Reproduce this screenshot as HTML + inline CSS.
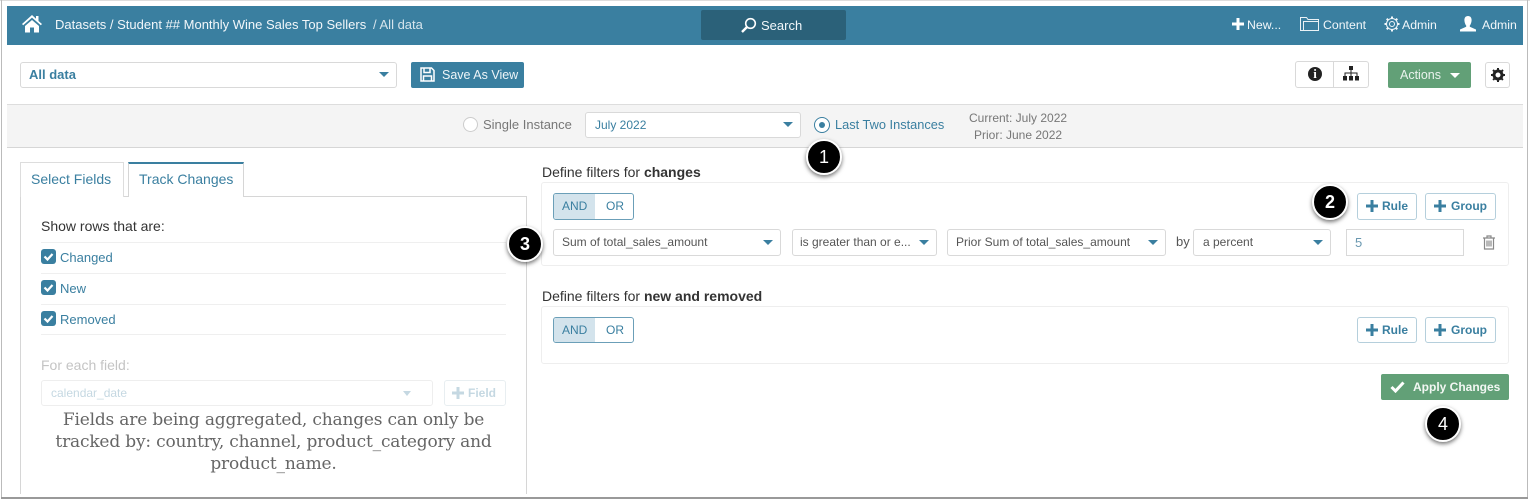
<!DOCTYPE html>
<html><head><meta charset="utf-8"><style>
html,body{margin:0;padding:0;width:1530px;height:501px;overflow:hidden;background:#fff}
body{position:relative;font-family:"Liberation Sans",sans-serif;font-size:13px;color:#444}
.a{position:absolute;box-sizing:border-box}
.t{position:absolute;white-space:nowrap;line-height:16px}
.sel{position:absolute;box-sizing:border-box;background:#fff;border:1px solid #d9d9d9;border-radius:3px}
.car{position:absolute;width:0;height:0;border-left:5px solid transparent;border-right:5px solid transparent;border-top:5px solid #3a7fa0}
.btn{position:absolute;box-sizing:border-box;background:#fff;border:1px solid #b5cfdc;border-radius:3px;color:#3a7fa0;font-weight:bold;font-size:12px}
.num{position:absolute;box-sizing:border-box;width:36px;height:36px;border-radius:50%;background:#000;border:2px solid #fff;box-shadow:0 2px 4px rgba(0,0,0,.55);color:#fff;font-size:18px;text-align:center;line-height:32px}
.cb{position:absolute;width:15px;height:15px;border-radius:3px;background:#3a7fa0}
.hr{position:absolute;left:41px;width:465px;height:1px;background:#efefef}
</style></head><body>
<div class="a" style="left:0;top:0;width:1530px;height:1px;background:#ddd"></div>
<div class="a" style="left:1px;top:0;width:1px;height:498px;background:#bbb"></div>
<div class="a" style="left:1527px;top:0;width:1px;height:498px;background:#bbb"></div>
<div class="a" style="left:1px;top:497px;width:1527px;height:2px;background:#999"></div>

<div class="a" style="left:7px;top:6px;width:1516px;height:39px;background:#3a7fa0"></div>
<svg class="a" style="left:21px;top:14px" width="22" height="19" viewBox="0 0 22 19"><path d="M11 1L1 10l1.2 1.3L11 3.6l8.8 7.7L21 10l-3.500-3V2h-2.500v2.800z" fill="#fff"/><path d="M4 12l7-6 7 6v6.500h-5v-5H9v5H4z" fill="#fff"/></svg>
<div class="t" style="left:55px;top:17px;color:#f2f7fa">Datasets / Student ## Monthly Wine Sales Top Sellers</div>
<div class="t" style="left:373px;top:17px;color:#d5e4ec">/ All data</div>
<div class="a" style="left:701px;top:10px;width:145px;height:30px;background:#2b6179;border-radius:2px"></div>
<svg class="a" style="left:740px;top:17px" width="18" height="17" viewBox="0 0 18 17"><circle cx="10.500" cy="6.500" r="4.800" fill="none" stroke="#fff" stroke-width="1.600"/><path d="M7 10l-5 5" stroke="#fff" stroke-width="2.400"/></svg>
<div class="t" style="left:761px;top:18px;color:#f2f7fa">Search</div>

<svg class="a" style="left:1232px;top:18px" width="12" height="12" viewBox="0 0 12 12"><path d="M4.500 0h3v4.500H12v3H7.500V12h-3V7.500H0v-3h4.500z" fill="#fff"/></svg>
<div class="t" style="left:1247px;top:17px;color:#f2f7fa;font-size:12.300px">New...</div>
<svg class="a" style="left:1300px;top:16px" width="19" height="16" viewBox="0 0 19 16" fill="none" stroke="#eaf2f6" stroke-width="1"><path d="M.5 14.500V1.500h6l1.500 2h10.500v11z"/><path d="M3.500 14.500V5.500h15"/></svg>
<div class="t" style="left:1323px;top:17px;color:#f2f7fa;font-size:12.300px">Content</div>
<svg class="a" style="left:1384px;top:16px" width="16" height="16" viewBox="0 0 16 16" fill="none" stroke="#f2f7fa"><circle cx="8" cy="8" r="2.500"/><circle cx="8" cy="8" r="5.500" stroke-width="1"/><path d="M8 .5v2M8 13.500v2M.5 8h2M13.500 8h2M2.700 2.700l1.400 1.400M11.900 11.900l1.400 1.400M2.700 13.300l1.400-1.400M11.900 4.100l1.400-1.400" stroke-width="2"/></svg>
<div class="t" style="left:1402px;top:17px;color:#f2f7fa;font-size:12.300px">Admin</div>
<svg class="a" style="left:1460px;top:16px" width="16" height="16" viewBox="0 0 16 16"><path d="M8 0c2.400 0 3.600 1.800 3.600 4S10.500 9 9.800 9.500v1.200L16 13.500V15.500H0v-2l6.200-2.800V9.500C5.500 9 4.400 6.200 4.400 4S5.600 0 8 0z" fill="#fff"/></svg>
<div class="t" style="left:1482px;top:17px;color:#f2f7fa;font-size:12.300px">Admin</div>

<div class="sel" style="left:20px;top:62px;width:377px;height:26px"></div>
<div class="t" style="left:29px;top:67px;color:#3a7fa0;font-weight:bold">All data</div>
<div class="car" style="left:379px;top:72px"></div>
<div class="a" style="left:411px;top:62px;width:113px;height:26px;background:#3a7fa0;border-radius:2px"></div>
<svg class="a" style="left:420px;top:67px" width="15" height="15" viewBox="0 0 15 15" fill="none" stroke="#fff" stroke-width="1.500"><path d="M1 1h10.500L14 3.500V14H1z"/><path d="M4 1.500v4h6v-4M3.500 14V9h8v5"/></svg>
<div class="t" style="left:442px;top:67px;color:#eef5f8;font-size:12.500px">Save As View</div>

<div class="sel" style="left:1295px;top:61px;width:74px;height:27px"></div>
<div class="a" style="left:1333px;top:61px;width:1px;height:27px;background:#d9d9d9"></div>
<div class="a" style="left:1308px;top:67px;width:14px;height:14px;border-radius:50%;background:#222"></div>
<div class="t" style="left:1308px;top:66px;width:14px;text-align:center;color:#fff;font-weight:bold;font-family:'Liberation Serif',serif;font-size:13px">i</div>
<svg class="a" style="left:1343px;top:66px" width="16" height="15" viewBox="0 0 16 15"><path d="M6 0h4v4H8.500v2.500H14.500V10H13.500V7.500H8.500V10h-1V7.500H2.500V10h-1V6.500H7.500V4H6z" fill="#222"/><rect y="10" width="4" height="4.500" fill="#222"/><rect x="6" y="10" width="4" height="4.500" fill="#222"/><rect x="12" y="10" width="4" height="4.500" fill="#222"/></svg>
<div class="a" style="left:1388px;top:62px;width:83px;height:26px;background:#62a077;border-radius:2px"></div>
<div class="t" style="left:1400px;top:67px;color:#eaf3ed;font-size:12.500px">Actions</div>
<div class="car" style="left:1450px;top:73px;border-top-color:#fff"></div>
<div class="sel" style="left:1485px;top:62px;width:25px;height:26px"></div>
<svg class="a" style="left:1491px;top:68px" width="14" height="14" viewBox="0 0 14 14"><circle cx="7" cy="7" r="4" fill="none" stroke="#222" stroke-width="3"/><path d="M7 0v14M0 7h14M2 2l10 10M12 2L2 12" stroke="#222" stroke-width="2" stroke-dasharray="2.400 9.200"/></svg>

<div class="a" style="left:7px;top:104px;width:1516px;height:44px;background:#f4f4f4;border-top:1px solid #ddd;border-bottom:1px solid #d6d6d6"></div>
<div class="a" style="left:463px;top:117px;width:15px;height:15px;border-radius:50%;background:#fff;border:1.500px solid #ccc"></div>
<div class="t" style="left:483px;top:117px;color:#777;font-size:13px">Single Instance</div>
<div class="sel" style="left:585px;top:112px;width:216px;height:26px"></div>
<div class="t" style="left:595px;top:117px;color:#3a7fa0;font-size:12px">July 2022</div>
<div class="car" style="left:783px;top:122px"></div>
<div class="a" style="left:814px;top:117px;width:16px;height:16px;border-radius:50%;border:1.500px solid #3a7fa0;background:#fff"></div>
<div class="a" style="left:819px;top:122px;width:6px;height:6px;border-radius:50%;background:#3a7fa0"></div>
<div class="t" style="left:835px;top:117px;color:#3a7fa0;font-size:12.800px">Last Two Instances</div>
<div class="t" style="left:969px;top:110px;color:#777;font-size:12px">Current: July 2022</div>
<div class="t" style="left:974px;top:127px;color:#777;font-size:12px">Prior: June 2022</div>

<div class="a" style="left:20px;top:196px;width:507px;height:298px;border:1px solid #d6d6d6;border-bottom:0"></div>
<div class="a" style="left:20px;top:162px;width:104px;height:35px;background:#fff;border:1px solid #ddd;border-bottom:0"></div>
<div class="t" style="left:31px;top:171px;color:#3a7fa0;font-size:14px">Select Fields</div>
<div class="a" style="left:128px;top:162px;width:116px;height:35px;background:#fff;border:1px solid #d6d6d6;border-top:2px solid #3a7fa0;border-bottom:0"></div>
<div class="t" style="left:139px;top:171px;color:#3a7fa0;font-size:14px">Track Changes</div>

<div class="t" style="left:41px;top:218px;color:#333;font-size:14px">Show rows that are:</div>
<div class="hr" style="top:242px"></div><div class="hr" style="top:273px"></div><div class="hr" style="top:304px"></div><div class="hr" style="top:334px"></div>
<div class="cb" style="left:41px;top:249px"></div>
<div class="cb" style="left:41px;top:280px"></div>
<div class="cb" style="left:41px;top:311px"></div>
<svg class="a" style="left:41px;top:249px" width="15" height="77" viewBox="0 0 15 77" fill="none" stroke="#fff" stroke-width="2.200"><path d="M3.500 7.500l3 3 5-5.500M3.500 38.500l3 3 5-5.500M3.500 69.500l3 3 5-5.500"/></svg>
<div class="t" style="left:60px;top:250px;color:#3a7fa0">Changed</div>
<div class="t" style="left:60px;top:281px;color:#3a7fa0">New</div>
<div class="t" style="left:60px;top:312px;color:#3a7fa0">Removed</div>

<div class="t" style="left:41px;top:357px;color:#c4c4c4;font-size:14px">For each field:</div>
<div class="sel" style="left:41px;top:380px;width:392px;height:26px;border-color:#eee"></div>
<div class="t" style="left:51px;top:385px;color:#c5d8e2;font-size:12px">calendar_date</div>
<div class="car" style="left:403px;top:391px;border-left-width:4px;border-right-width:4px;border-top-color:#c5d8e2"></div>
<div class="sel" style="left:444px;top:380px;width:62px;height:26px;border-color:#e8eef1"></div>
<svg class="a" style="left:452px;top:387px" width="12" height="12" viewBox="0 0 12 12"><path d="M4.500 0h3v4.500H12v3H7.500V12h-3V7.500H0v-3h4.500z" fill="#c5d8e2"/></svg>
<div class="t" style="left:468px;top:385px;color:#c5d8e2;font-size:12px;font-weight:bold">Field</div>
<div class="a" style="left:41px;top:409px;width:465px;text-align:center;font-family:'DejaVu Serif',serif;font-size:17px;line-height:22px;color:#666;letter-spacing:-.18px">Fields are being aggregated, changes can only be tracked by: country, channel, product_category and product_name.</div>

<div class="t" style="left:542px;top:164px;color:#333;font-size:14px">Define filters for <b>changes</b></div>
<div class="a" style="left:541px;top:182px;width:968px;height:84px;border:1px solid #eee;border-radius:3px"></div>
<div class="a" style="left:553px;top:193px;width:81px;height:27px;border:1px solid #6b9fb8;border-radius:3px;overflow:hidden"><div style="width:41px;height:100%;background:#d3e3ec"></div></div>
<div class="t" style="left:562px;top:198px;color:#3a7fa0;font-size:12px">AND</div>
<div class="t" style="left:606px;top:198px;color:#3a7fa0;font-size:12px">OR</div>
<div class="btn" style="left:1357px;top:193px;width:60px;height:27px"></div>
<svg class="a" style="left:1366px;top:200px" width="12" height="12" viewBox="0 0 12 12"><path d="M4.500 0h3v4.500H12v3H7.500V12h-3V7.500H0v-3h4.500z" fill="#3a7fa0"/></svg>
<div class="t" style="left:1382px;top:198px;color:#3a7fa0;font-size:12px;font-weight:bold">Rule</div>
<div class="btn" style="left:1425px;top:193px;width:71px;height:27px"></div>
<svg class="a" style="left:1434px;top:200px" width="12" height="12" viewBox="0 0 12 12"><path d="M4.500 0h3v4.500H12v3H7.500V12h-3V7.500H0v-3h4.500z" fill="#3a7fa0"/></svg>
<div class="t" style="left:1451px;top:198px;color:#3a7fa0;font-size:12px;font-weight:bold">Group</div>

<div class="sel" style="left:553px;top:229px;width:228px;height:27px"></div>
<div class="t" style="left:562px;top:234px;color:#555;font-size:12px">Sum of total_sales_amount</div>
<div class="car" style="left:763px;top:240px"></div>
<div class="sel" style="left:792px;top:229px;width:145px;height:27px"></div>
<div class="t" style="left:800px;top:234px;color:#555;font-size:12px">is greater than or e...</div>
<div class="car" style="left:919px;top:240px"></div>
<div class="sel" style="left:947px;top:229px;width:219px;height:27px"></div>
<div class="t" style="left:956px;top:234px;color:#555;font-size:12px">Prior Sum of total_sales_amount</div>
<div class="car" style="left:1148px;top:240px"></div>
<div class="t" style="left:1176px;top:234px;color:#555;font-size:13px">by</div>
<div class="sel" style="left:1193px;top:229px;width:138px;height:27px"></div>
<div class="t" style="left:1203px;top:234px;color:#555;font-size:12px">a percent</div>
<div class="car" style="left:1313px;top:240px"></div>
<div class="a" style="left:1346px;top:229px;width:118px;height:27px;border:1px solid #d9d9d9"></div>
<div class="t" style="left:1355px;top:235px;color:#6a98b0;font-size:13px">5</div>
<svg class="a" style="left:1482px;top:235px" width="14" height="15" viewBox="0 0 14 15" fill="none" stroke="#888" stroke-width="1.200"><path d="M1 3h12M5 3V1h4v2M2.500 3v11h9V3M5 5.500v6M7 5.500v6M9 5.500v6"/></svg>

<div class="t" style="left:542px;top:288px;color:#333;font-size:14px">Define filters for <b>new and removed</b></div>
<div class="a" style="left:541px;top:306px;width:968px;height:58px;border:1px solid #eee;border-radius:3px"></div>
<div class="a" style="left:553px;top:317px;width:81px;height:26px;border:1px solid #6b9fb8;border-radius:3px;overflow:hidden"><div style="width:41px;height:100%;background:#d3e3ec"></div></div>
<div class="t" style="left:562px;top:322px;color:#3a7fa0;font-size:12px">AND</div>
<div class="t" style="left:606px;top:322px;color:#3a7fa0;font-size:12px">OR</div>
<div class="btn" style="left:1357px;top:317px;width:60px;height:26px"></div>
<svg class="a" style="left:1366px;top:324px" width="12" height="12" viewBox="0 0 12 12"><path d="M4.500 0h3v4.500H12v3H7.500V12h-3V7.500H0v-3h4.500z" fill="#3a7fa0"/></svg>
<div class="t" style="left:1382px;top:322px;color:#3a7fa0;font-size:12px;font-weight:bold">Rule</div>
<div class="btn" style="left:1425px;top:317px;width:71px;height:26px"></div>
<svg class="a" style="left:1434px;top:324px" width="12" height="12" viewBox="0 0 12 12"><path d="M4.500 0h3v4.500H12v3H7.500V12h-3V7.500H0v-3h4.500z" fill="#3a7fa0"/></svg>
<div class="t" style="left:1451px;top:322px;color:#3a7fa0;font-size:12px;font-weight:bold">Group</div>

<div class="a" style="left:1381px;top:374px;width:128px;height:26px;background:#62a077;border-radius:2px"></div>
<svg class="a" style="left:1390px;top:381px" width="15" height="12" viewBox="0 0 15 12" fill="none" stroke="#fff" stroke-width="3"><path d="M1.500 6l4 4 8-8.500"/></svg>
<div class="t" style="left:1413px;top:379px;color:#f2f7f3;font-size:12px;font-weight:bold">Apply Changes</div>

<div class="num" style="left:806px;top:139px">1</div>
<div class="num" style="left:1312px;top:184px;font-weight:bold">2</div>
<div class="num" style="left:507px;top:226px;font-weight:bold">3</div>
<div class="num" style="left:1425px;top:406px">4</div>
</body></html>
